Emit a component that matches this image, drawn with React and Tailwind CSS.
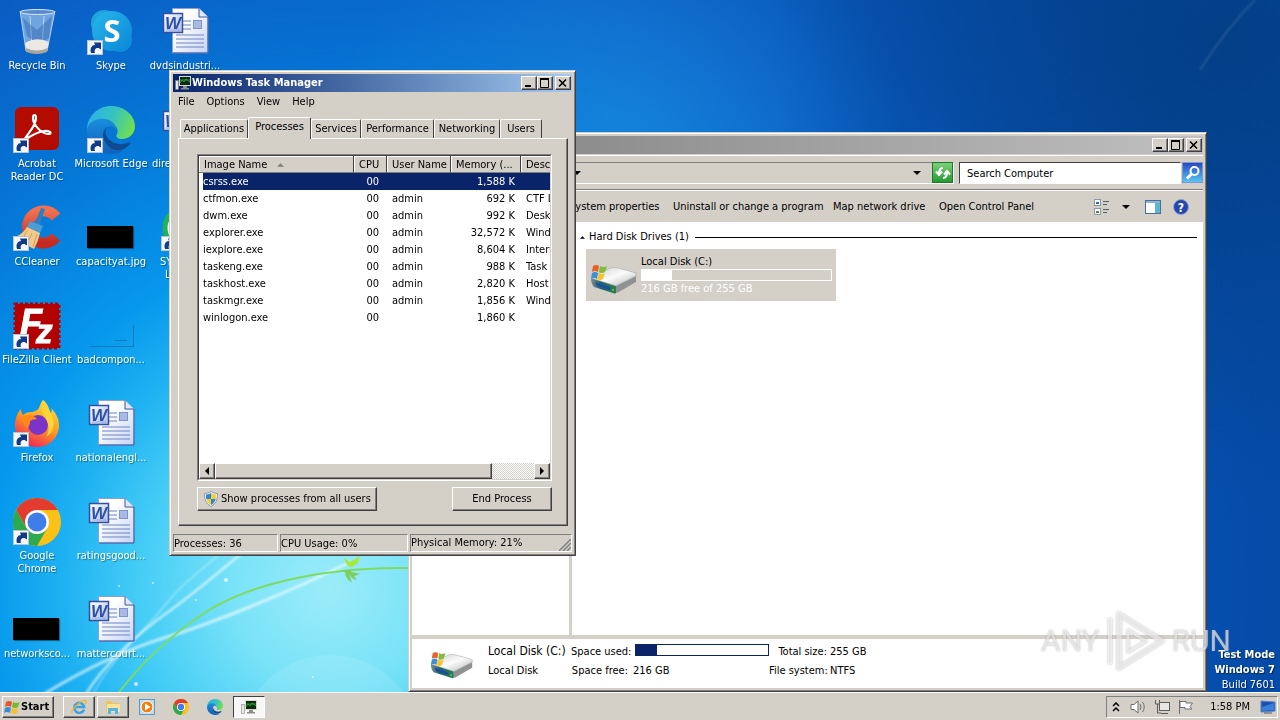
import { useState } from "react";

const raised =
  "bg-[#d4d0c8] border border-t-white border-l-white border-r-[#404040] border-b-[#404040] shadow-[inset_-1px_-1px_0_#808080]";
const sunken =
  "border border-t-[#808080] border-l-[#808080] border-r-white border-b-white";
const frame =
  "bg-[#d4d0c8] p-[3px] border border-t-[#d4d0c8] border-l-[#d4d0c8] border-r-[#404040] border-b-[#404040] shadow-[inset_1px_1px_0_#fff,inset_-1px_-1px_0_#808080]";

const processes = [
  { name: "csrss.exe", cpu: "00", user: "", memory: "1,588 K", desc: "" },
  { name: "ctfmon.exe", cpu: "00", user: "admin", memory: "692 K", desc: "CTF Loader" },
  { name: "dwm.exe", cpu: "00", user: "admin", memory: "992 K", desc: "Desktop Window Manager" },
  { name: "explorer.exe", cpu: "00", user: "admin", memory: "32,572 K", desc: "Windows Explorer" },
  { name: "iexplore.exe", cpu: "00", user: "admin", memory: "8,604 K", desc: "Internet Explorer" },
  { name: "taskeng.exe", cpu: "00", user: "admin", memory: "988 K", desc: "Task Scheduler Engine" },
  { name: "taskhost.exe", cpu: "00", user: "admin", memory: "2,820 K", desc: "Host Process" },
  { name: "taskmgr.exe", cpu: "00", user: "admin", memory: "1,856 K", desc: "Windows Task Manager" },
  { name: "winlogon.exe", cpu: "00", user: "", memory: "1,860 K", desc: "" },
];

const tabs = [
  { name: "Applications", width: "w-[68px]" },
  { name: "Processes", width: "w-[63px]" },
  { name: "Services", width: "w-[50px]" },
  { name: "Performance", width: "w-[73px]" },
  { name: "Networking", width: "w-[66px]" },
  { name: "Users", width: "w-[42px]" },
];

function Wallpaper() {
  return (
    <svg className="absolute inset-0 size-full" viewBox="0 0 1280 692" preserveAspectRatio="none" aria-hidden="true">
      <defs>
        <radialGradient id="sky" gradientUnits="userSpaceOnUse" cx="330" cy="590" r="950">
          <stop offset="0" stopColor="#9cecf9" />
          <stop offset=".1" stopColor="#7ae3f8" />
          <stop offset=".2" stopColor="#45cdf6" />
          <stop offset=".28" stopColor="#1fb2f2" />
          <stop offset=".36" stopColor="#0698ec" />
          <stop offset=".52" stopColor="#0577d6" />
          <stop offset=".68" stopColor="#0a5fc6" />
          <stop offset=".82" stopColor="#0753b4" />
          <stop offset="1" stopColor="#054ba8" />
        </radialGradient>
        <radialGradient id="glow" gradientUnits="userSpaceOnUse" cx="620" cy="140" r="280">
          <stop offset="0" stopColor="#1d8fe0" stopOpacity=".6" />
          <stop offset="1" stopColor="#1d8fe0" stopOpacity="0" />
        </radialGradient>
        <radialGradient id="corner" gradientUnits="userSpaceOnUse" cx="1230" cy="40" r="460">
          <stop offset="0" stopColor="#033a78" stopOpacity=".7" />
          <stop offset="1" stopColor="#033a78" stopOpacity="0" />
        </radialGradient>
        <filter id="soft" x="-10%" y="-10%" width="120%" height="120%">
          <feGaussianBlur stdDeviation="1" />
        </filter>
      </defs>
      <rect width="1280" height="692" fill="url(#sky)" />
      <rect width="1280" height="692" fill="url(#glow)" />
      <rect width="1280" height="692" fill="url(#corner)" />
      <g fill="none" stroke="#fff" filter="url(#soft)">
        <path d="M44 694C90 666 130 648 170 636S290 592 350 562" strokeWidth="3" opacity=".6" />
        <path d="M86 694C104 664 140 632 168 612S216 574 246 550" strokeWidth="2.5" opacity=".6" />
        <path d="M93 694C110 660 150 625 166 604S200 572 224 550" strokeWidth="1.5" opacity=".4" />
        <path d="M1200 70Q1225 30 1255 0" strokeWidth="2" opacity=".12" />
      </g>
      <circle cx="330" cy="746" r="91" fill="#fff" opacity=".1" />
      <path d="M119 692C146 658 178 630 206 612S300 566 412 568" fill="none" stroke="#7edb62" strokeWidth="2" />
      <path d="M344 558L350 562L360 556L358 563L352 567Q346 567 344 558Z" fill="#a6e83e" />
      <path d="M341 571Q350 568 352 572Q356 573 360 574L354 576L357 580Q351 579 349 574L352 583Q345 578 345 572Z" fill="#7ccf5c" />
      <g fill="#fff" opacity=".7">
        <circle cx="226" cy="580" r="2" />
        <circle cx="153" cy="583" r="1" />
        <circle cx="196" cy="600" r="1" />
        <circle cx="136" cy="684" r="2" />
        <circle cx="119" cy="586" r="1" />
        <circle cx="313" cy="677" r="1" />
      </g>
    </svg>
  );
}

function ShortcutArrow() {
  return (
    <g>
      <rect x=".5" y="32.5" width="15" height="14" fill="#f4f7fb" stroke="#b9c3d2" />
      <path d="M4 45C2.500 40 5 37 8 37L7 34.500H14V41.500L11.500 40C8 40 7 42 8 45Z" fill="#123a86" />
    </g>
  );
}

function RecycleBinIcon() {
  return (
    <svg className="size-12" viewBox="0 0 48 48" aria-hidden="true">
      <path d="M7 3L13 43Q24 48 34 43L42 3Z" fill="#c3dcf4" opacity=".55" />
      <path d="M7 3L13 43M42 3L34 43M17 8L19 40M31 8L29 40" stroke="#dcebfa" strokeWidth="1" opacity=".7" />
      <path d="M10 10L24 22L39 8L36 30L25 36L14 28Z" fill="#1c4f9e" opacity=".35" />
      <path d="M12 35Q24 28 36 34L34 43Q24 47 13 43Z" fill="#ece9e4" />
      <path d="M13 40Q24 45 35 40L34 44Q24 48 13 44Z" fill="#a9a49c" />
      <ellipse cx="24.500" cy="4" rx="17.500" ry="2.500" fill="#5b8cc9" stroke="#d9e6f3" />
    </svg>
  );
}

function SkypeIcon() {
  return (
    <svg className="size-12" viewBox="0 0 48 48" aria-hidden="true">
      <defs>
        <linearGradient id="skype" x1="0" y1="0" x2="1" y2="1">
          <stop offset="0" stopColor="#27b7ea" />
          <stop offset="1" stopColor="#0a86d8" />
        </linearGradient>
      </defs>
      <circle cx="17" cy="15" r="13" fill="#1fa5de" />
      <circle cx="33" cy="32" r="12" fill="#0a8fdc" />
      <circle cx="25" cy="23" r="20" fill="url(#skype)" />
      <text x="25" y="34" textAnchor="middle" fontSize="31" fontWeight="700" fontFamily="Open Sans, sans-serif" fill="#fff">S</text>
      <ShortcutArrow />
    </svg>
  );
}

function WordIcon() {
  return (
    <svg className="size-12" viewBox="0 0 48 48" aria-hidden="true">
      <defs>
        <linearGradient id="paper" x1="0" y1="0" x2="1" y2="1">
          <stop offset=".3" stopColor="#fff" />
          <stop offset="1" stopColor="#c5d3f3" />
        </linearGradient>
        <linearGradient id="wbox" x1="0" y1="0" x2="1" y2="1">
          <stop offset="0" stopColor="#fff" />
          <stop offset="1" stopColor="#a9bce8" />
        </linearGradient>
      </defs>
      <path d="M11.500 .5H38L47 9V45H11.500Z" fill="url(#paper)" stroke="#8ba0d6" />
      <path d="M38 .5V9H47" fill="#dfe7f8" stroke="#3c58a4" />
      <path d="M47 9V45H12" fill="none" stroke="#3a55a3" />
      <path d="M22 13H30M22 17H30M22 21H30M15 27H43M15 31H43M15 35H43M15 39H43" stroke="#6c84c5" />
      <rect x="32.500" y="12.500" width="8" height="8" fill="#a8b9e4" stroke="#7f94cf" />
      <rect x="2.500" y="5.500" width="19" height="19" fill="url(#wbox)" stroke="#3450a0" strokeWidth="1.500" />
      <text x="12" y="21" textAnchor="middle" fontSize="17" fontWeight="700" fontStyle="italic" fontFamily="Liberation Sans, sans-serif" fill="#2c4fa8">W</text>
      <path d="M5 22H19" stroke="#7f94cf" opacity=".6" />
    </svg>
  );
}

function AcrobatIcon() {
  return (
    <svg className="size-12" viewBox="0 0 48 48" aria-hidden="true">
      <rect x="2" y="1" width="44" height="43" rx="6" fill="#b30b00" />
      <path d="M11 34C16 26 23 20 23 12C23 8 20 8 20 12C20 18 27 27 35 28C40 28 37 24 31 25C23 26 15 32 11 34Z" fill="none" stroke="#fff" strokeWidth="2.200" strokeLinejoin="round" />
      <ShortcutArrow />
    </svg>
  );
}

function EdgeIcon({ size = "size-12", shortcut }) {
  return (
    <svg className={size} viewBox="0 0 48 48" aria-hidden="true">
      <defs>
        <linearGradient id="edgeTop" x1="0" y1=".3" x2="1" y2=".6">
          <stop offset="0" stopColor="#2bb0e8" />
          <stop offset=".5" stopColor="#36c3c0" />
          <stop offset="1" stopColor="#71e04c" />
        </linearGradient>
        <linearGradient id="edgeBody" x1="0" y1="0" x2="0" y2="1">
          <stop offset="0" stopColor="#1b8ddd" />
          <stop offset="1" stopColor="#1161b8" />
        </linearGradient>
      </defs>
      <path d="M0 24C0 10 11 0 24 0C38 0 48 10 48 20C48 28 42 33 35 33C31 33 28 31 30 28C32 25 30 17 19 16C9 15 1 20 0 24Z" fill="url(#edgeTop)" />
      <path d="M0 24C1 17 8 12 18 13C26 14 30 20 29 25C28 21 24 19 20 21C15 24 15 34 22 40C26 44 34 46 37 44C33 47 28 48 24 48C10 48 0 37 0 24Z" fill="url(#edgeBody)" />
      <path d="M20 21C15 24 14 33 21 40C27 46 36 46 43 38C44 36 42 36 40 37C33 40 22 37 19 29C18 26 18 23 20 21Z" fill="#0e4b93" />
      {shortcut && <ShortcutArrow />}
    </svg>
  );
}

function CCleanerIcon() {
  return (
    <svg className="size-12" viewBox="0 0 48 48" aria-hidden="true">
      <defs>
        <linearGradient id="cc" x1="0" y1="0" x2="0" y2="1">
          <stop offset="0" stopColor="#f2704f" />
          <stop offset="1" stopColor="#c22a22" />
        </linearGradient>
      </defs>
      <path d="M43 13A16 16 0 1 0 43 33" fill="none" stroke="url(#cc)" strokeWidth="11" />
      <path d="M28 4L32 5L26 23L21 21Z" fill="#2f7fc0" />
      <path d="M17 17L30 22L27 29L14 23Z" fill="#4d9bd6" />
      <path d="M14 23L27 29Q25 38 21 45L0 34Q9 31 14 23Z" fill="#f2ca8a" />
      <path d="M14 27L8 37M19 29L14 41M24 30L20 43" stroke="#d29f55" />
      <ShortcutArrow />
    </svg>
  );
}

function FileZillaIcon() {
  return (
    <svg className="size-12" viewBox="0 0 48 48" aria-hidden="true">
      <rect x="2" y="2" width="44" height="44" fill="#b30000" stroke="#b30000" strokeWidth="3" strokeDasharray="3 2" />
      <text x="7" y="33" fontSize="36" fontWeight="700" fontStyle="italic" fontFamily="Liberation Sans, sans-serif" fill="#fff" stroke="#fff">F</text>
      <text x="23" y="41" fontSize="33" fontWeight="700" fontStyle="italic" fontFamily="Liberation Sans, sans-serif" fill="#fff" stroke="#fff">z</text>
      <ShortcutArrow />
    </svg>
  );
}

function FirefoxIcon() {
  return (
    <svg className="size-12" viewBox="0 0 48 48" aria-hidden="true">
      <defs>
        <linearGradient id="fox" x1=".8" y1="0" x2=".3" y2="1">
          <stop offset="0" stopColor="#ffe23e" />
          <stop offset=".5" stopColor="#ff9a1f" />
          <stop offset="1" stopColor="#f0205c" />
        </linearGradient>
      </defs>
      <path d="M30 0C36 5 35 9 38 13C39 11 39 9 38 8C44 14 46 20 46 25C46 38 36 47 24 47C12 47 2 38 2 25C2 19 4 13 8 9C8 12 9 14 10 15C12 13 15 12 18 12C21 12 25 10 26 8C27 5 28 2 30 0Z" fill="url(#fox)" />
      <circle cx="25" cy="25" r="10" fill="#7a35c8" />
      <path d="M8 18C12 14 20 14 24 19C21 20 18 19 17 22C17 25 15 26 15 28C11 26 10 22 8 18Z" fill="#ff8a16" />
      <path d="M30 0C36 5 36 11 39 16C43 24 40 33 33 37C37 31 36 24 33 19C29 13 27 7 30 0Z" fill="#ffd43a" />
      <ShortcutArrow />
    </svg>
  );
}

function ChromeIcon({ size = "size-12", shortcut }) {
  return (
    <svg className={size} viewBox="0 0 48 48" aria-hidden="true">
      <circle cx="24" cy="24" r="24" fill="#fbc116" />
      <path d="M24 12H44.800A24 24 0 0 0 3.200 12L13.600 30Z" fill="#e33b2e" />
      <path d="M3.200 12A24 24 0 0 0 24 48L34.400 30L24 36L13.600 30Z" fill="#2da94f" />
      <circle cx="24" cy="24" r="12" fill="#fff" />
      <circle cx="24" cy="24" r="9.500" fill="#3f7de8" />
      {shortcut && <ShortcutArrow />}
    </svg>
  );
}

function BlackThumb() {
  return (
    <span className="flex size-12 items-end">
      <span className="mb-1 h-[22px] w-[46px] bg-black shadow-[1px_1px_1px_rgba(0,0,0,0.4)]" />
    </span>
  );
}

function EmptyThumb() {
  return (
    <svg className="size-12" viewBox="0 0 48 48" aria-hidden="true">
      <path d="M3 44.500H46.500V23M28 38.500H40" fill="none" stroke="#0f6fae" opacity=".8" />
    </svg>
  );
}

function GreenAppIcon() {
  return (
    <svg className="size-12" viewBox="0 0 48 48" aria-hidden="true">
      <circle cx="24" cy="24" r="20" fill="#fff" stroke="#1fb45a" strokeWidth="5" />
      <ShortcutArrow />
    </svg>
  );
}

const desktopItems = [
  { label: "Recycle Bin", icon: <RecycleBinIcon /> },
  { label: "Acrobat\nReader DC", icon: <AcrobatIcon /> },
  { label: "CCleaner", icon: <CCleanerIcon /> },
  { label: "FileZilla Client", icon: <FileZillaIcon /> },
  { label: "Firefox", icon: <FirefoxIcon /> },
  { label: "Google\nChrome", icon: <ChromeIcon shortcut /> },
  { label: "networksco...", icon: <BlackThumb /> },
  { label: "Skype", icon: <SkypeIcon /> },
  { label: "Microsoft Edge", icon: <EdgeIcon shortcut /> },
  { label: "capacityat.jpg", icon: <BlackThumb /> },
  { label: "badcompon...", icon: <EmptyThumb /> },
  { label: "nationalengl...", icon: <WordIcon /> },
  { label: "ratingsgood...", icon: <WordIcon /> },
  { label: "mattercourt...", icon: <WordIcon /> },
  { label: "dvdsindustri...", icon: <WordIcon /> },
  { label: "dire", icon: <WordIcon />, left: "self-start pl-1" },
  { label: "SY\n L", icon: <GreenAppIcon />, left: "self-start pl-3" },
];

function DesktopItem({ item }) {
  return (
    <div className="flex flex-col items-center pt-2">
      {item.icon}
      <span
        className={`mt-[3px] whitespace-pre text-center leading-[13px] text-white [text-shadow:1px_1px_1px_rgba(0,0,0,0.4)] ${item.left ?? ""}`}
      >
        {item.label}
      </span>
    </div>
  );
}

function ComputerIcon({ className = "size-4" }) {
  return (
    <svg className={className} viewBox="0 0 16 16" aria-hidden="true">
      <rect x=".5" y="5.500" width="3" height="9" fill="#e6e6e6" stroke="#777" strokeWidth=".5" />
      <rect x="4" y="1" width="12" height="10" fill="#d8d8d0" />
      <rect x="5" y="2" width="10" height="8" fill="#0b2a12" />
      <path d="M5 8L7 5L9 7L11 4L15 7M5 5H15" fill="none" stroke="#2fae3c" strokeWidth=".8" />
      <path d="M8 11H12V13H14V14.500H6V13H8Z" fill="#8c8c88" />
    </svg>
  );
}

function TitleButtons() {
  const button = `${raised} flex h-[14px] w-4 items-center justify-center`;
  return (
    <div className="flex">
      <button className={button} aria-label="Minimize">
        <svg className="size-3" viewBox="0 0 12 12"><path d="M2 9H8" stroke="#000" strokeWidth="2" /></svg>
      </button>
      <button className={button} aria-label="Maximize">
        <svg className="size-3" viewBox="0 0 12 12"><path d="M1.500 2V10.500H9.500V2M1 2H10" fill="none" stroke="#000" /><path d="M1 2H10" stroke="#000" strokeWidth="2" /></svg>
      </button>
      <button className={`${button} ml-[2px]`} aria-label="Close">
        <svg className="size-3" viewBox="0 0 12 12"><path d="M2 2.500L9 9.500M9 2.500L2 9.500" stroke="#000" strokeWidth="1.600" /></svg>
      </button>
    </div>
  );
}

function Triangle({ className }) {
  return (
    <svg className={className} viewBox="0 0 8 4" aria-hidden="true">
      <path d="M0 0H8L4 4Z" fill="currentColor" />
    </svg>
  );
}

function DriveIcon({ className }) {
  return (
    <svg className={className} viewBox="0 0 48 30" aria-hidden="true">
      <defs>
        <linearGradient id="lid" x1="0" y1="0" x2="1" y2="1">
          <stop offset="0" stopColor="#c9cccb" />
          <stop offset=".5" stopColor="#fbfbfb" />
          <stop offset="1" stopColor="#b4b8b6" />
        </linearGradient>
        <linearGradient id="front" x1="0" y1="0" x2="1" y2="0">
          <stop offset="0" stopColor="#7f8a88" />
          <stop offset=".4" stopColor="#1d6470" />
          <stop offset="1" stopColor="#2e7d4e" />
        </linearGradient>
      </defs>
      <path d="M1 14L26 21V29Q25 30 23 29L4 23Q1 20 1 14Z" fill="url(#front)" />
      <path d="M26 21L46 11V18L27 29Q26 29 26 28Z" fill="#8f9290" />
      <path d="M1 14L20 4Q24 3 28 4L46 9V12L26 22Z" fill="url(#lid)" stroke="#a7abaa" strokeWidth=".6" />
      <path d="M5 18L20 23V26L7 22Z" fill="#1b4f9c" />
      <circle cx="23" cy="26" r="1" fill="#4fe06a" />
      <path d="M3 2Q6 0 9 2L8 8Q5 6 2 8Z" fill="#e8602c" />
      <path d="M10 2Q13 4 17 2L15 8Q12 10 9 8Z" fill="#84bb3a" />
      <path d="M2 9Q5 7 8 9L7 15Q4 13 1 15Z" fill="#3f8fd8" />
      <path d="M9 9Q12 11 15 9L13 15Q10 17 7 15Z" fill="#f5c52f" />
    </svg>
  );
}

function Explorer() {
  return (
    <section className={`${frame} absolute left-[408px] top-[132px] w-[799px]`}>
      <header className="flex h-[18px] items-center justify-end bg-linear-to-r from-[#808080] to-[#c0c0c0] pr-px">
        <TitleButtons />
      </header>
      <div className="mt-px flex h-[35px] items-center border-t border-b border-t-white border-b-[#808080]">
        <div className={`${sunken} ml-16 flex h-[22px] flex-1 items-center`}>
          <Triangle className="ml-[96px] h-1 w-2" />
          <Triangle className="mr-[11px] ml-auto h-1 w-2" />
          <button className="flex size-[21px] items-center justify-center border border-[#1d7a2a] bg-linear-to-b from-[#7bd07a] to-[#1f9a33]" aria-label="Refresh">
            <svg className="size-4" viewBox="0 0 16 16" fill="none" stroke="#fff" strokeWidth="2">
              <path d="M8 3C5 3 4 5 4 9M1 6.500L4 10L7 6.500M8 13C11 13 12 11 12 7M9 9.500L12 6L15 9.500" />
            </svg>
          </button>
        </div>
        <input
          type="text"
          aria-label="Search Computer"
          placeholder="Search Computer"
          className="ml-[5px] h-[22px] w-[222px] border border-t-[#404040] border-l-[#404040] border-r-white border-b-white bg-white px-[7px] pt-px text-black outline-none placeholder:text-black"
        />
        <button className="ml-px flex size-[21px] items-center justify-center border border-[#7d9ad0] bg-linear-to-b from-[#2c46c2] to-[#5cc4f2]" aria-label="Search">
          <svg className="size-4" viewBox="0 0 16 16" fill="none" stroke="#fff" strokeWidth="2">
            <circle cx="9.500" cy="6" r="4" />
            <path d="M6.500 9L2 13.500" strokeWidth="3" />
          </svg>
        </button>
      </div>
      <nav className="flex h-8 items-center border-t border-white pr-[14px] pl-[157px] whitespace-nowrap">
        <button className="w-[88px] pt-px text-left">System properties</button>
        <button className="ml-4 w-[144px] pt-px text-left">Uninstall or change a program</button>
        <button className="ml-4 w-[90px] pt-px text-left">Map network drive</button>
        <button className="ml-4 pt-px text-left">Open Control Panel</button>
        <button className="ml-auto" aria-label="Change your view">
          <svg className="size-4" viewBox="0 0 16 16">
            <rect x=".5" y=".5" width="6" height="6" fill="#fff" stroke="#8a99a8" />
            <rect x=".5" y="9.500" width="6" height="6" fill="#fff" stroke="#8a99a8" />
            <path d="M2 4H5" stroke="#2a6cc0" strokeWidth="2" />
            <path d="M2 13H5" stroke="#4b8a3a" strokeWidth="2" />
            <path d="M9 2.500H15M9 5.500H13M9 10.500H15M9 13.500H13" stroke="#50606e" />
          </svg>
        </button>
        <button className="ml-3" aria-label="More options">
          <Triangle className="h-1 w-2" />
        </button>
        <button className="ml-[15px]" aria-label="Show the preview pane">
          <svg className="size-4" viewBox="0 0 16 16">
            <rect x=".5" y="1.500" width="15" height="13" fill="#fff" stroke="#4b6f96" />
            <path d="M1 3H15" stroke="#8db3d9" strokeWidth="2" />
            <rect x="10" y="4" width="5" height="10" fill="#5cb7d0" />
          </svg>
        </button>
        <button className="ml-3" aria-label="Get help">
          <svg className="size-4" viewBox="0 0 16 16">
            <circle cx="8" cy="8" r="7.500" fill="#2746ac" stroke="#8fa3dc" />
            <text x="8" y="12.500" textAnchor="middle" fontSize="12" fontWeight="700" fill="#fff">?</text>
          </svg>
        </button>
      </nav>
      <div className="flex h-[413px] bg-white">
        <div className="box-content w-[157px] border-r-[3px] border-[#d4d0c8]" />
        <div className="min-w-0 flex-1 pt-2 pr-[6px] pl-2">
          <div className="flex items-center gap-1 leading-[14px]">
            <Triangle className="h-[3px] w-[5px] rotate-180" />
            <h2>Hard Disk Drives (1)</h2>
            <hr className="ml-[2px] flex-1 border-black" />
          </div>
          <div className="mt-[5px] ml-[6px] flex h-[52px] w-[250px] items-center bg-[#d4d0c8] pl-1">
            <DriveIcon className="mt-2 h-[30px] w-12" />
            <div className="ml-[3px] flex-1 pr-1 leading-[13px]">
              <p>Local Disk (C:)</p>
              <div className="mt-px h-3 border border-white">
                <div className="h-full w-4/25 bg-white" />
              </div>
              <p className="mt-px text-white">216 GB free of 255 GB</p>
            </div>
          </div>
        </div>
      </div>
      <footer className="flex h-[53px] border-t-4 border-[#d4d0c8] bg-white whitespace-nowrap">
        <DriveIcon className="mt-3 ml-[18px] h-7 w-11" />
        <div className="mt-[5px] ml-[14px] w-[83px] space-y-1 leading-[15px]">
          <p className="text-xs leading-[15px]">Local Disk (C:)</p>
          <p>Local Disk</p>
        </div>
        <dl className="mt-[5px] grid h-fit grid-cols-[57px_141px_58px_60px] gap-y-1 leading-[15px]">
          <dt className="text-right">Space used:</dt>
          <dd className="pl-[7px]">
            <div className="h-3 border border-[#0a246a]">
              <div className="h-full w-4/25 bg-[#0a246a]" />
            </div>
          </dd>
          <dt className="text-right">Total size:</dt>
          <dd className="pl-[3px]">255 GB</dd>
          <dt className="text-right">Space free:</dt>
          <dd className="pl-[5px]">216 GB</dd>
          <dt className="text-right">File system:</dt>
          <dd className="pl-[3px]">NTFS</dd>
        </dl>
      </footer>
    </section>
  );
}

function ShieldIcon() {
  return (
    <svg className="size-4" viewBox="0 0 16 16" aria-hidden="true">
      <path d="M8 .5Q11 2.500 14.500 2.500Q15 12 8 15.500Q1 12 1.500 2.500Q5 2.500 8 .5Z" fill="#eef2f6" stroke="#8f9dab" />
      <path d="M8 2Q5.500 3.500 3 3.600Q2.900 6 3.300 8H8Z" fill="#2f86d6" />
      <path d="M8 2Q10.500 3.500 13 3.600Q13.100 6 12.700 8H8Z" fill="#f7cf2e" />
      <path d="M8 8H3.300Q4.200 12 8 14Z" fill="#f7cf2e" />
      <path d="M8 8H12.700Q11.800 12 8 14Z" fill="#2f86d6" />
    </svg>
  );
}

function TaskManager() {
  const [selected, setSelected] = useState("csrss.exe");
  const th =
    "border-r border-b border-r-[#404040] border-b-[#808080] shadow-[inset_1px_1px_0_#fff] px-[5px] pt-px text-left font-normal";

  return (
    <section className={`${frame} absolute top-[70px] left-[169px] w-[407px]`}>
      <header className="flex h-[18px] items-center bg-linear-to-r from-[#0a246a] to-[#a6caf0] pr-px pl-[2px]">
        <ComputerIcon />
        <h1 className="ml-px flex-1 pt-px font-bold text-white">Windows Task Manager</h1>
        <TitleButtons />
      </header>
      <nav className="flex h-[19px] items-center gap-3 pt-[2px] pl-[5px]">
        <button>File</button>
        <button>Options</button>
        <button>View</button>
        <button>Help</button>
      </nav>
      <div className="mt-[6px] flex h-[21px] items-end pl-[7px]">
        {tabs.map((tab) => (
          <button
            key={tab.name}
            className={`${tab.width} rounded-t-[2px] border-t border-r border-l border-t-white border-r-[#404040] border-l-white text-center ${
              tab.name === "Processes" ? "relative top-px h-[22px] bg-[#d4d0c8] pb-[2px]" : "h-[19px] pt-px"
            }`}
          >
            {tab.name}
          </button>
        ))}
      </div>
      <div className="mr-1 ml-[5px] border border-t-white border-l-white border-r-[#404040] border-b-[#404040] px-[18px] pt-[15px] pb-[14px] shadow-[inset_-1px_-1px_0_#808080]">
        <div className="mr-[-3px] border border-t-[#808080] border-l-[#808080] border-r-white border-b-white">
          <div className="flex h-[325px] flex-col overflow-hidden border border-t-[#404040] border-l-[#404040] border-r-[#d4d0c8] border-b-[#d4d0c8] bg-white">
            <div className="flex-1 overflow-hidden">
              <table className="w-[440px] table-fixed border-separate border-spacing-0 leading-4 whitespace-nowrap">
                <thead className="bg-[#d4d0c8] leading-[15px]">
                  <tr>
                    <th className={`${th} w-[155px]`}>
                      <span className="flex items-center gap-[10px]">
                        Image Name
                        <Triangle className="h-1 w-[7px] rotate-180 text-[#808080]" />
                      </span>
                    </th>
                    <th className={`${th} w-[33px]`}>CPU</th>
                    <th className={`${th} w-16`}>User Name</th>
                    <th className={`${th} w-[70px]`}>Memory (...</th>
                    <th className={th}>Description</th>
                  </tr>
                </thead>
                <tbody>
                  {processes.map((p) => (
                    <tr
                      key={p.name}
                      onClick={() => setSelected(p.name)}
                      className={p.name === selected ? "bg-[#0a246a] text-white" : "text-black"}
                    >
                      <td className="border-l-4 border-white pt-px">{p.name}</td>
                      <td className="px-2 pt-px text-right">{p.cpu}</td>
                      <td className="px-[5px] pt-px">{p.user}</td>
                      <td className="px-[6px] pt-px text-right">{p.memory}</td>
                      <td className="px-[5px] pt-px">{p.desc}</td>
                    </tr>
                  ))}
                </tbody>
              </table>
            </div>
            <div className="flex h-4 bg-[repeating-conic-gradient(#fff_0_25%,#d4d0c8_0_50%)] bg-[length:2px_2px]">
              <button className={`${raised} flex w-4 items-center justify-center`} aria-label="Scroll left">
                <Triangle className="h-1 w-2 rotate-90" />
              </button>
              <div className={`${raised} w-[277px]`} />
              <button className={`${raised} ml-auto flex w-4 items-center justify-center`} aria-label="Scroll right">
                <Triangle className="h-1 w-2 -rotate-90" />
              </button>
            </div>
          </div>
        </div>
        <div className="mt-[6px] mr-[-3px] flex justify-between">
          <button className={`${raised} flex h-6 w-[180px] items-center gap-[2px] pl-[5px] whitespace-nowrap`}>
            <ShieldIcon />
            <span className="pt-px">Show processes from all users</span>
          </button>
          <button className={`${raised} h-6 w-[100px] pt-px`}>End Process</button>
        </div>
      </div>
      <footer className="mt-2 flex h-[18px] gap-[2px] leading-4">
        <p className={`${sunken} w-[105px] pt-px`}>Processes: 36</p>
        <p className={`${sunken} w-32 pt-px`}>CPU Usage: 0%</p>
        <p className={`${sunken} flex flex-1 items-end justify-between pt-px`}>
          Physical Memory: 21%
          <svg className="size-3" viewBox="0 0 12 12" aria-hidden="true">
            <path d="M0 12L12 0M4 12L12 4M8 12L12 8" stroke="#808080" strokeWidth="1.500" />
          </svg>
        </p>
      </footer>
    </section>
  );
}

function Watermark() {
  return (
    <div className="pointer-events-none absolute right-[49px] bottom-5 flex items-center gap-[6px] font-['Roboto',sans-serif] text-[30px] leading-[60px] text-white/60 [text-shadow:0_0_2px_rgba(120,120,120,0.6)]">
      <span>ANY</span>
      <svg className="h-[62px] w-[60px] drop-shadow-[0_0_1px_rgba(120,120,120,0.8)]" viewBox="0 0 60 62" fill="none" stroke="currentColor" strokeLinejoin="round" aria-hidden="true">
        <path d="M4 8V54" strokeWidth="4" />
        <path d="M13 4V58L56 31Z" strokeWidth="5" />
        <path d="M22 20V42L40 31Z" strokeWidth="3" />
      </svg>
      <span>RUN</span>
    </div>
  );
}

function WindowsFlag() {
  return (
    <svg className="size-4" viewBox="0 0 16 16" aria-hidden="true">
      <path d="M2 3Q5 1 8 3L7 8Q4 6 1 8Z" fill="#e8562a" />
      <path d="M9 3Q12 5 15.500 3L14 8Q11 10 8 8Z" fill="#76b82e" />
      <path d="M1 9Q4 7 7 9L6 14Q3 12 0 14Z" fill="#3a8bd8" />
      <path d="M8 9Q11 11 14 9L13 14Q10 16 7 14Z" fill="#f6c026" />
    </svg>
  );
}

function Taskbar() {
  return (
    <footer className="relative flex h-7 items-center border-t border-white bg-[#d4d0c8] px-[2px] pt-px">
      <button className={`${raised} flex h-[22px] w-[52px] items-center gap-px pl-px font-bold`}>
        <WindowsFlag />
        Start
      </button>
      <div className="ml-[9px] flex items-center gap-[2px]">
        <button className={`${raised} flex h-[22px] w-8 items-center justify-center`} aria-label="Internet Explorer">
          <svg className="size-4" viewBox="0 0 16 16" fill="none">
            <path d="M13 10.500A5 5 0 1 1 13.200 8H4" stroke="#3aa0e6" strokeWidth="2.400" />
            <path d="M1 14Q0 11 6 6Q13 0 15 2Q16 3 14 5" stroke="#e9b72c" strokeWidth="1.300" />
          </svg>
        </button>
        <button className={`${raised} flex h-[22px] w-8 items-center justify-center`} aria-label="Windows Explorer">
          <svg className="size-4" viewBox="0 0 16 16">
            <path d="M1 2H6L7 4H14V13H1Z" fill="#e9c65a" />
            <path d="M2 5H15V13H2Z" fill="#f8e398" />
            <path d="M3 15V9H13V15H10V12H6V15Z" fill="#59b4e4" />
          </svg>
        </button>
      </div>
      <div className="ml-[10px] flex items-center gap-[18px]">
        <button aria-label="Windows Media Player">
          <svg className="size-4" viewBox="0 0 16 16">
            <rect x=".5" y=".5" width="15" height="15" fill="#bcdcf2" stroke="#5b9ac8" />
            <circle cx="8" cy="8" r="6" fill="#f08010" stroke="#fff" />
            <path d="M6 4.500L11.500 8L6 11.500Z" fill="#fff" />
          </svg>
        </button>
        <button aria-label="Google Chrome"><ChromeIcon size="size-4" /></button>
        <button aria-label="Microsoft Edge"><EdgeIcon size="size-4" /></button>
      </div>
      <button
        className="ml-[10px] flex h-[22px] w-8 items-center justify-center border border-t-[#404040] border-l-[#404040] border-r-white border-b-white bg-[#f8f7f5]"
        aria-label="Windows Task Manager"
      >
        <ComputerIcon />
      </button>
      <div className={`${sunken} ml-auto flex h-[22px] items-center pr-px pl-[5px]`}>
        <button aria-label="Show hidden icons">
          <svg className="h-[10px] w-2" viewBox="0 0 8 10" fill="none" stroke="#000" strokeWidth="1.500">
            <path d="M1 4L4 1L7 4M1 9L4 6L7 9" />
          </svg>
        </button>
        <svg className="ml-[10px] size-4" viewBox="0 0 16 16" fill="#fff" stroke="#6d6d6d" aria-hidden="true">
          <path d="M1 5.500H4L8 2V14L4 10.500H1Z" />
          <path d="M10 5Q12 8 10 11M12.500 3Q16 8 12.500 13" fill="none" />
        </svg>
        <svg className="ml-2 size-4" viewBox="0 0 16 16" fill="#e9e7e2" stroke="#5d5d5d" aria-hidden="true">
          <rect x="5.500" y="3.500" width="10" height="8" />
          <path d="M7 14.500H14M1.500 1V5H5.500V1M3.500 5V14H7" fill="none" />
        </svg>
        <svg className="ml-2 size-4" viewBox="0 0 16 16" fill="#fff" stroke="#6d6d6d" aria-hidden="true">
          <path d="M1.500 1V15" />
          <path d="M2 2.500H8V4H14.500L12 7.500L14 10H7V8.500H2Z" />
        </svg>
        <time className="ml-4 pt-px">1:58 PM</time>
        <svg className="ml-[10px] size-4" viewBox="0 0 16 16" aria-hidden="true">
          <path d="M1 2L15 3V12L1 13Z" fill="#1c4fae" stroke="#5a83c9" />
          <path d="M2 8L14 4V11L2 12Z" fill="#3b7fdc" />
          <path d="M4 14H12" stroke="#555" />
        </svg>
      </div>
    </footer>
  );
}

export default function App() {
  return (
    <div className="flex min-h-screen flex-col overflow-hidden font-['DejaVu_Sans_Condensed',sans-serif] text-[11px] text-black">
      <main className="relative flex-1 overflow-hidden">
        <Wallpaper />
        <div className="relative grid w-[222px] grid-flow-col grid-cols-3 grid-rows-[repeat(7,98px)]">
          {desktopItems.map((item) => (
            <DesktopItem key={item.label} item={item} />
          ))}
        </div>
        <p className="absolute right-[5px] bottom-0 text-right leading-[15px] text-white [text-shadow:1px_1px_1px_rgba(0,0,0,0.5)]">
          <strong className="block">Test Mode</strong>
          <strong className="block">Windows 7</strong>
          Build 7601
        </p>
        <Explorer />
        <TaskManager />
        <Watermark />
      </main>
      <Taskbar />
    </div>
  );
}
